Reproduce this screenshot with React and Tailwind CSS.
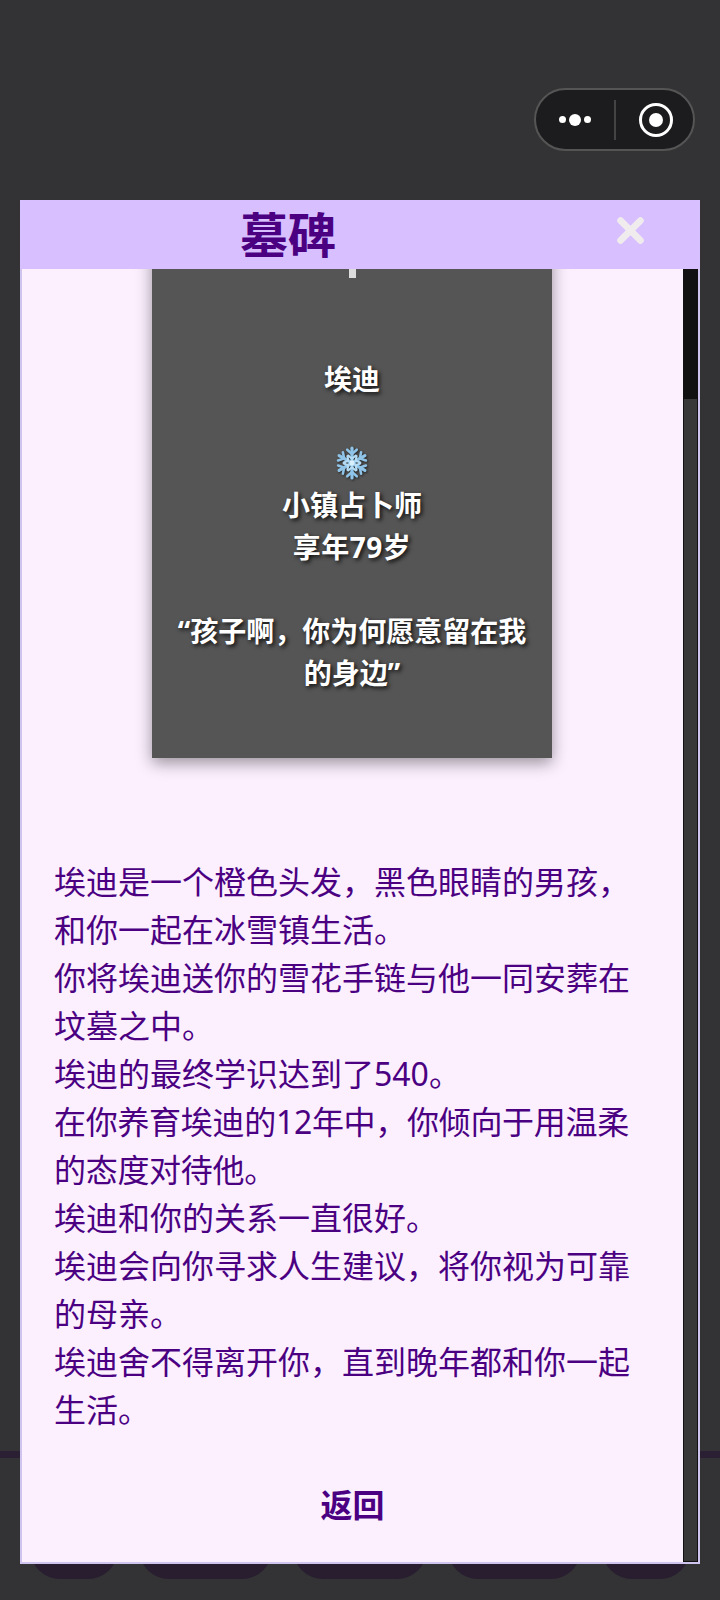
import React from 'react';

const fontStack = "font-['Noto_Sans','Noto_Sans_CJK_SC',sans-serif]";

const story = [
  { text: '埃迪是一个橙色头发，黑色眼睛的男孩，和你一起在冰雪镇生活。' },
  { text: '你将埃迪送你的雪花手链与他一同安葬在坟墓之中。' },
  { text: '埃迪的最终学识达到了540。' },
  { text: '在你养育埃迪的12年中，你倾向于用温柔的态度对待他。', className: 'tracking-[-0.3px]' },
  { text: '埃迪和你的关系一直很好。' },
  { text: '埃迪会向你寻求人生建议，将你视为可靠的母亲。' },
  { text: '埃迪舍不得离开你，直到晚年都和你一起生活。' },
];

const Snowflake = () => {
  const angles = [0, 60, 120, 180, 240, 300];
  return (
    <svg width="32" height="34" viewBox="-15 -16 30 32" className="drop-shadow-[1px_1px_1px_rgba(0,0,0,0.6)]">
      {angles.map((a) => (
        <g key={a} transform={`rotate(${a})`} stroke="#8fc4e8" strokeLinecap="round" fill="none">
          <path d="M0 0V-14" strokeWidth="3" />
          <path d="M-4.5 -12.5L0 -8.5L4.5 -12.5" strokeWidth="2.4" />
          <path d="M-3.5 -7L0 -4L3.5 -7" strokeWidth="2" stroke="#b5dcf5" />
        </g>
      ))}
      <circle r="2.5" fill="#d8effc" />
    </svg>
  );
};

const TabBar = () => (
  <div className="flex flex-col">
    <div className="h-[7px] bg-[#2a1f33]" />
    <div className="flex gap-[21px] pl-[30px] pb-[21px]">
      <div className="w-[88px] h-[121px] rounded-b-[30px] bg-[#281e30]" />
      <div className="w-[133px] h-[121px] rounded-b-[30px] bg-[#281e30]" />
      <div className="w-[134px] h-[121px] rounded-b-[30px] bg-[#281e30]" />
      <div className="w-[133px] h-[121px] rounded-b-[30px] bg-[#281e30]" />
      <div className="w-[88px] h-[121px] rounded-b-[30px] bg-[#281e30]" />
    </div>
  </div>
);

const Capsule = () => (
  <div className="absolute top-[88px] left-[534px] w-[161px] h-[63px] rounded-full border-2 border-[#555] bg-[#1c1c1e] flex items-center">
    <div className="w-[55px] flex items-center justify-end gap-[3px]">
      <span className="w-[7px] h-[7px] rounded-full bg-white" />
      <span className="w-[12px] h-[12px] rounded-full bg-white" />
      <span className="w-[7px] h-[7px] rounded-full bg-white" />
    </div>
    <div className="ml-[23px] w-[2px] h-[40px] bg-[#444]" />
    <div className="ml-[23px] w-[34px] h-[34px] rounded-full border-[3px] border-white flex items-center justify-center">
      <span className="w-[14px] h-[14px] rounded-full bg-white" />
    </div>
  </div>
);

const Stone = () => (
  <div className="ml-[130px] -mt-[60px] w-[400px] pb-[64px] px-[20px] bg-[#555] shadow-[0_5px_15px_rgba(0,0,0,0.4)] flex flex-col items-center text-white text-[28px] font-bold leading-[42px] text-center [text-shadow:2px_2px_4px_rgba(0,0,0,0.85)]">
    <div className="w-[7px] h-[69px] bg-[#ddd]" />
    <div className="mt-[80px]">埃迪</div>
    <div className="h-[42px] mt-[42px] flex items-center justify-center">
      <Snowflake />
    </div>
    <div>小镇占卜师</div>
    <div className="tracking-[0.5px]">享年79岁</div>
    <div className="mt-[42px]">“孩子啊，你为何愿意留在我的身边”</div>
  </div>
);

const TombModal = () => (
  <div className="absolute top-[200px] left-[20px] w-[680px] h-[1364px] flex flex-col">
    <div className="h-[69px] shrink-0 bg-[#d8bfff] flex items-center pl-[220px] pr-[56px] justify-between">
      <div className="text-[48px] font-bold leading-none text-[#4b0082]">墓碑</div>
      <svg width="27" height="27" viewBox="0 0 30 30" className="mb-[8px]">
        <path d="M4 4L26 26M26 4L4 26" stroke="#f0ecee" strokeWidth="7.5" strokeLinecap="round" />
      </svg>
    </div>
    <div className="flex-1 min-h-0 flex border-2 border-t-0 border-[#cfc4ee] bg-[#fcf0ff]">
      <div className="flex-1 min-w-0 overflow-hidden flex flex-col">
        <Stone />
        <div className="mt-[100px] px-[32px] text-[32px] leading-[48px] text-[#4b0082]">
          {story.map((line) => (
            <div key={line.text} className={line.className}>{line.text}</div>
          ))}
        </div>
        <div className="mt-[47px] text-center text-[32px] font-bold leading-[48px] text-[#4b0082]">返回</div>
      </div>
      <div className="w-[15px] shrink-0 bg-[#111] flex flex-col">
        <div className="h-[130px]" />
        <div className="flex-1 bg-[#383838] mx-px mb-px" />
      </div>
    </div>
  </div>
);

export default function App() {
  return (
    <div className={`relative h-[1600px] bg-[#333335] flex flex-col justify-end overflow-hidden ${fontStack}`}>
      <TabBar />
      <Capsule />
      <TombModal />
    </div>
  );
}
